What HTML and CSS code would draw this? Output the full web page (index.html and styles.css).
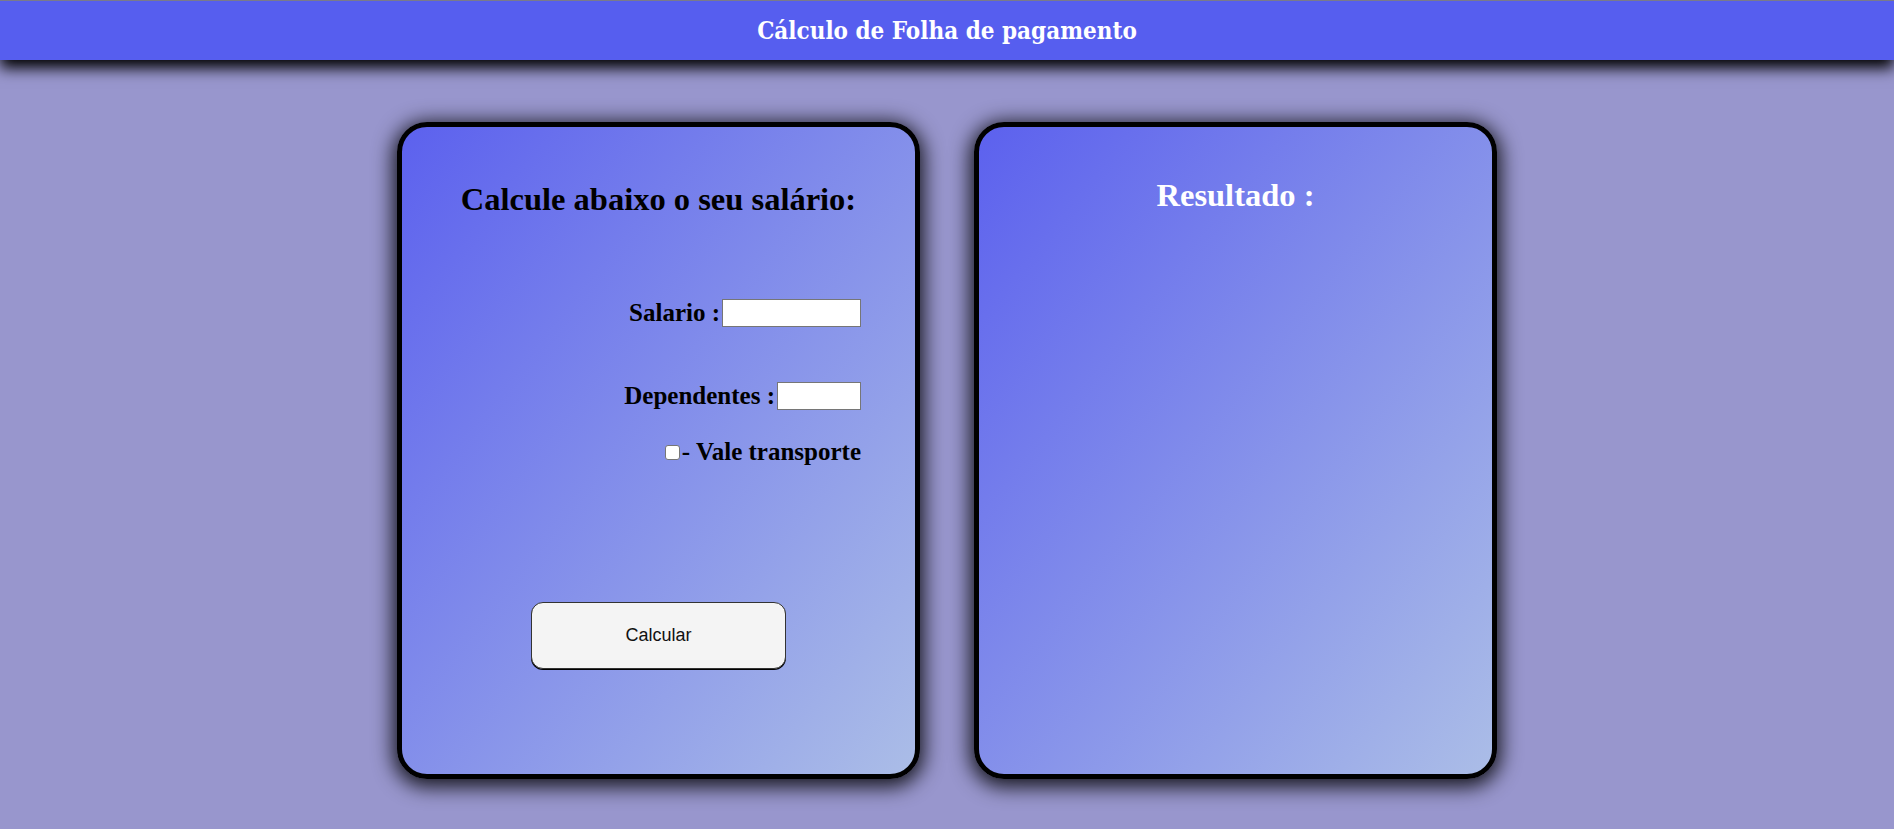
FILE: index.html
```html
<!DOCTYPE html>
<html lang="pt-BR">
<head>
<meta charset="utf-8">
<title>Cálculo de Folha de pagamento</title>
<link rel="stylesheet" href="styles.css">
</head>
<body>
<header class="topbar">
  <h1 class="topbar-title">Cálculo de Folha de pagamento</h1>
</header>
<main class="stage">
  <section class="card">
    <h2 class="card-title">Calcule abaixo o seu salário:</h2>
    <div class="fields">
      <label class="row">Salario :<input type="text" class="field field-wide"></label>
      <label class="row">Dependentes :<input type="text" class="field field-narrow"></label>
      <label class="row row-check"><input type="checkbox" class="check">- Vale transporte</label>
    </div>
    <div class="actions">
      <button type="button" class="btn">Calcular</button>
    </div>
  </section>
  <section class="card">
    <h2 class="card-title card-title-light">Resultado :</h2>
  </section>
</main>
</body>
</html>
```

FILE: styles.css
```css
html {
  background: #ffffff;
}

body {
  margin: 0;
  height: 829px;
  background: #9896cd;
  font-family: "Liberation Serif", "Times New Roman", serif;
}

.topbar {
  height: 59px;
  border-top: 1px solid #7a7a8a;
  background: #565eef;
  box-shadow: 0 8px 14px #000;
  display: flex;
  align-items: center;
  justify-content: center;
  position: relative;
}

.topbar-title {
  margin: 0;
  color: #ffffff;
  font-family: "DejaVu Serif Condensed", "DejaVu Serif", serif;
  font-stretch: condensed;
  font-weight: bold;
  font-size: 24px;
  line-height: 26px;
}

.stage {
  display: flex;
  justify-content: center;
  gap: 54px;
  padding-top: 62px;
}

.card {
  box-sizing: border-box;
  width: 523px;
  height: 657px;
  border: 5px solid #000;
  border-radius: 30px;
  background: linear-gradient(to bottom right, #5c61ee, #abbde7);
  box-shadow: 0 4px 20px 4px rgba(0, 0, 0, 0.85);
  display: flex;
  flex-direction: column;
}

.card-title {
  margin: 54px 0 0;
  text-align: center;
  font-size: 32.5px;
  line-height: 37px;
  font-weight: bold;
  color: #000;
}

.card-title-light {
  margin-top: 50px;
  color: #ffffff;
}

.fields {
  margin-top: 81px;
  padding-right: 54px;
  display: flex;
  flex-direction: column;
  align-items: flex-end;
}

.row {
  height: 28px;
  display: flex;
  align-items: center;
  font-size: 25px;
  font-weight: bold;
  color: #000;
}

.row + .row {
  margin-top: 55px;
}

.row.row-check {
  margin-top: 28px;
}

.field {
  box-sizing: border-box;
  height: 28px;
  margin: 0 0 0 2px;
  border: 1px solid #767676;
  background: #fff;
  padding: 0 4px;
}

.field-wide {
  width: 139px;
}

.field-narrow {
  width: 84px;
}

.check {
  appearance: none;
  box-sizing: border-box;
  width: 15px;
  height: 15px;
  margin: 0 2px 0 0;
  border: 1px solid #767676;
  border-radius: 3px;
  background: #fff;
}

.actions {
  margin-top: 136px;
  display: flex;
  justify-content: center;
}

.btn {
  width: 255px;
  height: 67px;
  border: 1px solid #333;
  border-radius: 12px;
  background: #f4f4f4;
  box-shadow: 0 1px 0 #000;
  font-family: "Liberation Sans", Arial, sans-serif;
  font-size: 18px;
  color: #111;
}
```
